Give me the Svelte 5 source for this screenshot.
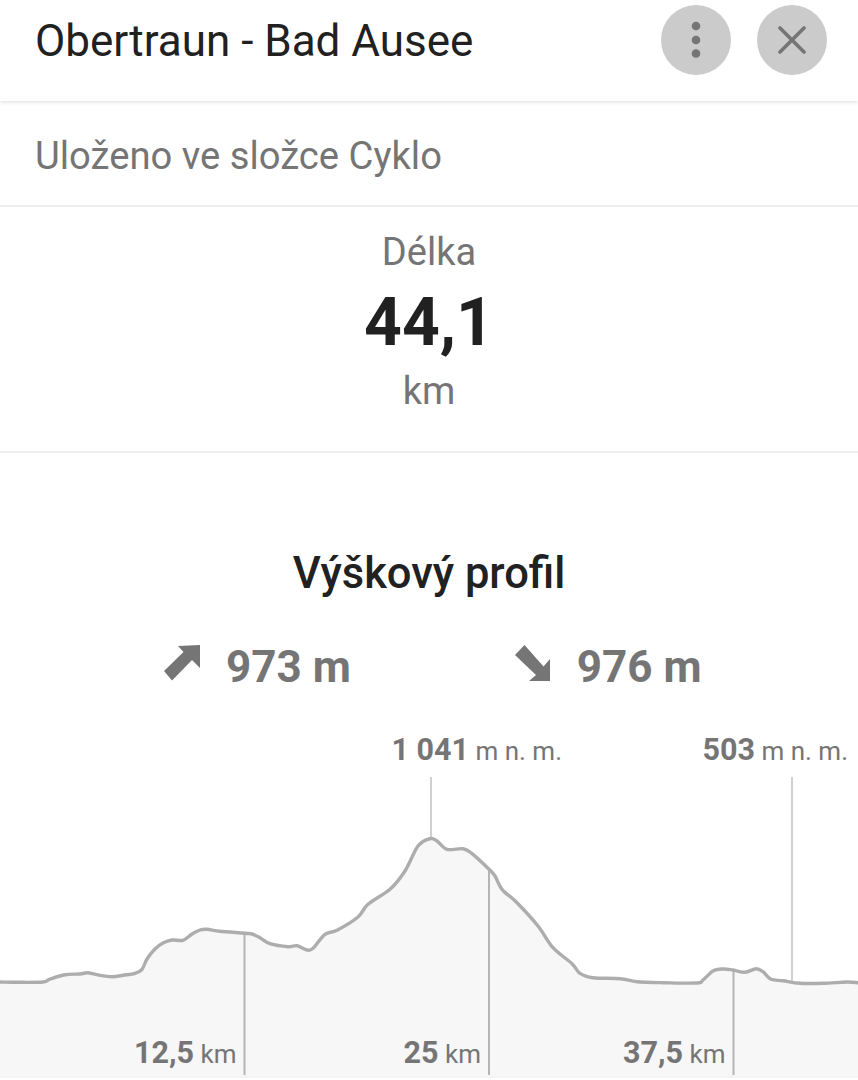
<script lang="ts">
	const points = [
		[0, 981], [17, 981.3], [43, 981], [50, 978], [65, 973.7], [80, 973], [88, 971.7], [100, 974.3],
		[112, 975.7], [123, 974.3], [135, 972.3], [142, 968.3], [147, 958], [155, 948], [163, 942],
		[172, 939], [183, 939.3], [192, 933], [200, 929], [207, 928.3], [220, 930.3], [245, 932.3],
		[252, 933], [260, 936.7], [270, 942.7], [288, 945.7], [297, 944.7], [307, 949], [313, 947.3],
		[325, 933.3], [337, 929.3], [358, 916], [368, 903.3], [390, 888.3], [405, 870], [418, 845],
		[430, 837.7], [437, 840], [447, 848.3], [463, 847.7], [472, 852.7], [489, 868.3], [495, 875],
		[502, 888.3], [517, 901.7], [538, 925], [553, 946.7], [572, 962.7], [580, 972.3], [593, 976.7],
		[620, 977.7], [637, 980.7], [663, 981.7], [697, 982], [703, 979], [713, 970], [723, 968],
		[733, 969], [745, 971.3], [756, 967.7], [763, 970.7], [771, 978.3], [783, 979.7], [800, 982.3],
		[823, 982.3], [847, 981], [858, 981.7]
	];

	// chart svg starts at page y 730
	const TOP = 730;
	const BASE = 1076 - TOP;

	// catmull-rom through the sampled points so the line doesn't look faceted
	function smooth(pts: number[][]) {
		let d = `M${pts[0][0]} ${pts[0][1] - TOP}`;
		for (let i = 0; i < pts.length - 1; i++) {
			const p0 = pts[Math.max(i - 1, 0)];
			const p1 = pts[i];
			const p2 = pts[i + 1];
			const p3 = pts[Math.min(i + 2, pts.length - 1)];
			const c1x = p1[0] + (p2[0] - p0[0]) / 6;
			const c1y = p1[1] + (p2[1] - p0[1]) / 6 - TOP;
			const c2x = p2[0] - (p3[0] - p1[0]) / 6;
			const c2y = p2[1] - (p3[1] - p1[1]) / 6 - TOP;
			d += ` C${c1x.toFixed(1)} ${c1y.toFixed(1)} ${c2x.toFixed(1)} ${c2y.toFixed(1)} ${p2[0]} ${p2[1] - TOP}`;
		}
		return d;
	}

	const line = smooth(points);
	const area = `${line} L858 ${BASE} L0 ${BASE} Z`;

	const distances = [
		{ x: 244.5, top: 932, value: '12,5' },
		{ x: 489, top: 868, value: '25' },
		{ x: 733.5, top: 969, value: '37,5' }
	];
	const peaks = [
		{ x: 431, bottom: 838, value: '1 041', labelRight: 296 },
		{ x: 792, bottom: 981, value: '503', labelRight: 10 }
	];
</script>

<div class="page">
	<header class="top">
		<h1>Obertraun - Bad Ausee</h1>
		<div class="actions">
			<button class="round" aria-label="Více">
				<svg viewBox="0 0 24 40" width="24" height="40">
					<circle cx="12" cy="6" r="4.3" />
					<circle cx="12" cy="20" r="4.3" />
					<circle cx="12" cy="33.5" r="4.3" />
				</svg>
			</button>
			<button class="round" aria-label="Zavřít">
				<svg viewBox="0 0 28 28" width="28" height="28">
					<path d="M2 2 L26 26 M26 2 L2 26" />
				</svg>
			</button>
		</div>
	</header>

	<div class="folder">Uloženo ve složce Cyklo</div>

	<section class="length">
		<div class="label">Délka</div>
		<div class="value">44,1</div>
		<div class="unit">km</div>
	</section>

	<section class="profile">
		<h2>Výškový profil</h2>
		<div class="stats">
			<div class="stat up">
				<svg viewBox="0 0 36 36" width="36" height="36">
					<path d="M36 0 L14 1 L19.5 7 L0 26 L8 35.5 L28 15 L36 23 Z" />
				</svg>
				<span>973 m</span>
			</div>
			<div class="stat down">
				<svg viewBox="0 0 36 36" width="36" height="36">
					<path d="M9.5 0 L0 10 L21 30 L14 36 L35 36 L35 14 L28.5 21.5 Z" />
				</svg>
				<span>976 m</span>
			</div>
		</div>

		<div class="chart">
			<svg class="plot" viewBox="0 0 858 350" width="858" height="350">
				<path class="area" d={area} />
				<line class="base" x1="0" x2="858" y1={BASE} y2={BASE} />
				{#each peaks as peak}
					<line class="peak" x1={peak.x} x2={peak.x} y1={776 - TOP} y2={peak.bottom - TOP} />
				{/each}
				{#each distances as d}
					<line class="tick" x1={d.x} x2={d.x} y1={d.top - TOP} y2={1074 - TOP} />
				{/each}
				<path class="line" d={line} />
			</svg>

			{#each peaks as peak}
				<div class="height" style="right: {peak.labelRight}px"><b>{peak.value}</b> m n. m.</div>
			{/each}
			{#each distances as d}
				<div class="dist" style="right: {858 - d.x + 8}px"><b>{d.value}</b> km</div>
			{/each}
		</div>
	</section>
</div>

<style>
	:global(body) {
		background: #fff;
	}

	.page {
		width: 858px;
		height: 1080px;
		overflow: hidden;
		font-family: Roboto, "Liberation Sans", sans-serif;
		color: #757575;
		background: #fff;
	}

	.top {
		height: 101px;
		box-sizing: border-box;
		display: flex;
		align-items: flex-start;
		justify-content: space-between;
		padding: 5px 31px 0 35px;
		box-shadow: 0 1px 4px rgba(0, 0, 0, 0.14);
		position: relative;
	}

	h1 {
		margin: 11px 0 0;
		font-size: 44px;
		line-height: 50px;
		font-weight: 400;
		color: #212121;
	}

	.actions {
		display: flex;
		gap: 26px;
	}

	.round {
		width: 70px;
		height: 70px;
		padding: 0;
		border: 0;
		border-radius: 50%;
		background: #cbcbcb;
		display: flex;
		align-items: center;
		justify-content: center;
	}

	.round circle {
		fill: #757575;
	}

	.round path {
		stroke: #757575;
		stroke-width: 3.6;
		stroke-linecap: round;
		fill: none;
	}

	.folder {
		height: 106px;
		box-sizing: border-box;
		padding: 32px 35px 0;
		font-size: 38.2px;
		line-height: 46px;
		border-bottom: 2px solid #eeeeee;
	}

	.length {
		height: 246px;
		box-sizing: border-box;
		padding-top: 23px;
		text-align: center;
		border-bottom: 2px solid #eeeeee;
	}

	.label {
		font-size: 38px;
		line-height: 44px;
	}

	.value {
		font-size: 66px;
		font-weight: 700;
		line-height: 78px;
		margin-top: 10px;
		color: #212121;
	}

	.unit {
		font-size: 38px;
		line-height: 46px;
		margin-top: 6px;
	}

	.profile {
		padding-top: 96px;
	}

	h2 {
		margin: 0;
		text-align: center;
		font-size: 43.5px;
		line-height: 50px;
		font-weight: 500;
		color: #212121;
	}

	.stats {
		display: flex;
		margin-top: 43px;
		padding-left: 164px;
		gap: 164px;
		height: 50px;
	}

	.stat {
		display: flex;
		align-items: center;
		gap: 26px;
		font-size: 44px;
		font-weight: 700;
	}

	.stat svg {
		fill: #757575;
		margin-top: -8px;
	}

	.chart {
		position: relative;
		height: 350px;
		margin-top: 39px;
	}

	.plot {
		display: block;
	}

	.area {
		fill: #f7f7f7;
	}

	.base {
		stroke: #eeeeee;
		stroke-width: 1;
	}

	.line {
		fill: none;
		stroke: #adadad;
		stroke-width: 3.4;
		stroke-linejoin: round;
	}

	.tick {
		stroke: #b5b5b5;
		stroke-width: 2;
	}

	.peak {
		stroke: #d0d0d0;
		stroke-width: 2;
	}

	.height,
	.dist {
		position: absolute;
		white-space: nowrap;
		font-size: 26px;
		line-height: 36px;
	}

	.height {
		top: 1px;
	}

	.dist {
		top: 304px;
	}

	b {
		font-size: 30.5px;
		font-weight: 700;
	}
</style>
